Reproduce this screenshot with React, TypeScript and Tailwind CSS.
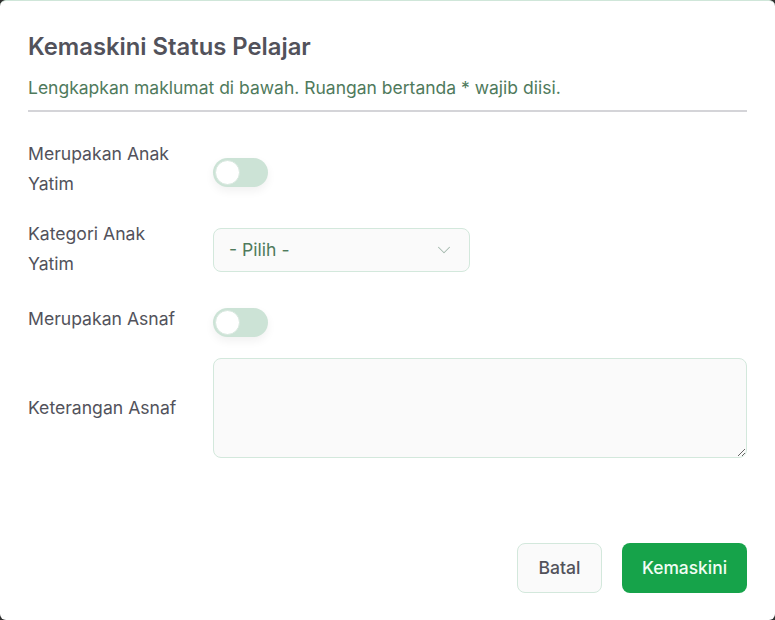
import { ChevronDown } from "lucide-react";

function Toggle({ className = "" }: { className?: string }) {
  return (
    <button
      type="button"
      className={`relative h-[29px] w-[55px] shrink-0 rounded-full bg-[#cce3d6] shadow-[0_4px_10px_rgba(0,0,0,0.06)] ${className}`}
    >
      <span className="absolute left-[2px] top-[2px] h-[25px] w-[25px] rounded-full border border-[#d7e7de] bg-white" />
    </button>
  );
}

export default function App() {
  return (
    <div className="h-[620px] w-[775px] bg-[#2f2f2f] font-['Inter',sans-serif]">
      <div className="flex h-full w-full flex-col rounded-[6px] border-t border-[#cfe6d9] bg-white px-[28px]">
        <h2 className="mt-[30px] text-[23.8px] font-semibold leading-[32px] text-[#52525b]">
          Kemaskini Status Pelajar
        </h2>
        <p className="mt-[12px] text-[17.5px] leading-[26px] text-[#4f7a5c]">
          Lengkapkan maklumat di bawah. Ruangan bertanda * wajib diisi.
        </p>
        <div className="mt-[9px] h-[2px] bg-[#d4d4d8]" />

        <div className="mt-[27px] flex flex-col text-[17.6px] leading-[30px] text-[#52525b]">
          <div className="flex items-start">
            <label className="w-[185px] shrink-0">
              Merupakan Anak
              <br />
              Yatim
            </label>
            <Toggle className="mt-[19px]" />
          </div>

          <div className="mt-[20px] flex items-start">
            <label className="w-[185px] shrink-0">
              Kategori Anak
              <br />
              Yatim
            </label>
            <div className="mt-[9px] flex h-[44px] w-[257px] items-center justify-between rounded-[8px] border border-[#d3e8dc] bg-[#fafafa] pl-[15px] pr-[14px]">
              <span className="text-[#4f7a5c]">- Pilih -</span>
              <ChevronDown size={22} strokeWidth={1.1} className="text-[#a3b8ac]" />
            </div>
          </div>

          <div className="mt-[25px] flex items-start">
            <label className="w-[185px] shrink-0">Merupakan Asnaf</label>
            <Toggle className="mt-[4px]" />
          </div>

          <div className="mt-[21px] flex items-start">
            <label className="mt-[35px] w-[185px] shrink-0">Keterangan Asnaf</label>
            <textarea className="h-[100px] flex-1 rounded-[8px] border border-[#d3e8dc] bg-[#fafafa] outline-none" />
          </div>
        </div>

        <div className="mt-auto mb-[27px] flex justify-end gap-[20px]">
          <button className="h-[50px] w-[85px] rounded-[8px] border border-[#d3e8dc] bg-[#fafafa] text-[17.6px] font-medium text-[#52525b]">
            Batal
          </button>
          <button className="h-[50px] w-[125px] rounded-[8px] bg-[#16a34a] text-[17.4px] font-medium text-[#f0fdf4]">
            Kemaskini
          </button>
        </div>
      </div>
    </div>
  );
}
